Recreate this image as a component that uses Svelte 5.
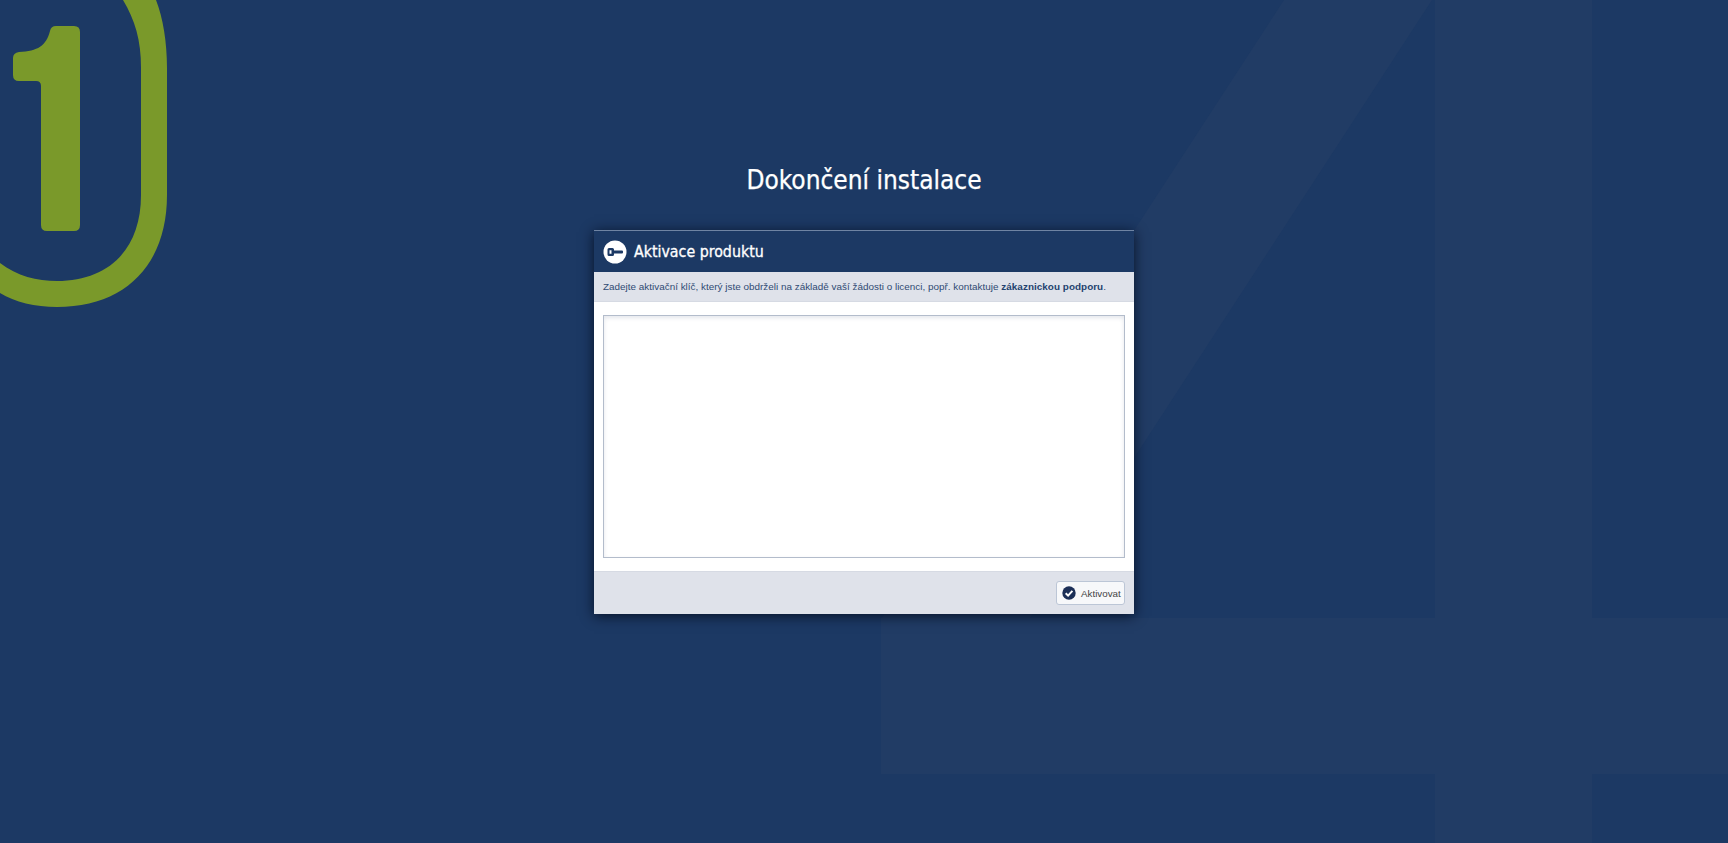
<script>
    let licenseKey = "";
</script>

<main class="page">
    <!-- big faded "4" in the background -->
    <svg class="bg-four" viewBox="0 0 1728 843" aria-hidden="true">
        <path d="M1284 0H1432L1030 618H1435V0H1592V618H1728V774H1592V843H1435V774H881V618L882 618Z" fill="#213c65" />
    </svg>

    <!-- green logo, cut off by the corner -->
    <svg class="logo" viewBox="0 0 170 310" aria-hidden="true">
        <path fill="#7a992a" d="M156 0C163 18 167 42 167 68V195C167 265 125 307 57 307C35 307 15 302 0 293V263C17 276 37 281 57 281C108 281 141 250 141 195V68C141 40 135 20 123 0Z" />
        <path fill="#7a992a" d="M56 26H74Q80 26 80 32V225Q80 231 74 231H47Q41 231 41 225V86Q41 81 36 81H19Q13 81 13 75V58Q13 53 19 52C38 51 46 46 50 31Q51 26 56 26Z" />
    </svg>

    <h1>Dokončení instalace</h1>

    <section class="dialog">
        <header>
            <svg class="key" viewBox="0 0 24 24" aria-hidden="true">
                <circle cx="12" cy="12" r="11.5" fill="#fff" />
                <path fill="#1c3964" fill-rule="evenodd" d="M6 8H9.5Q11 8 11 9.5V10.5H19Q20 10.5 20 11.5V12.5Q20 13.5 19 13.5H11V14.5Q11 16 9.5 16H6Q4.5 16 4.5 14.5V9.5Q4.5 8 6 8ZM6.5 10.2V13.8H8.5V10.2Z" />
            </svg>
            <h2>Aktivace produktu</h2>
        </header>

        <p class="hint">
            Zadejte aktivační klíč, který jste obdrželi na základě vaší žádosti o licenci, popř. kontaktuje
            <a href="#support">zákaznickou podporu</a>.
        </p>

        <div class="body">
            <textarea bind:value={licenseKey}></textarea>
        </div>

        <footer>
            <button type="button">
                <svg viewBox="0 0 14 14" aria-hidden="true">
                    <circle cx="7" cy="7" r="6.7" fill="#1c2f57" />
                    <path d="M3.7 7.2L6.1 9.6L10.4 4.9" fill="none" stroke="#fff" stroke-width="2" />
                </svg>
                Aktivovat
            </button>
        </footer>
    </section>
</main>

<style>
    :global(body) {
        margin: 0;
        background: #1c3964;
    }

    .page {
        position: relative;
        height: 843px;
        overflow: hidden;
        display: flex;
        flex-direction: column;
        align-items: center;
        background: #1c3964;
    }

    .bg-four {
        position: absolute;
        inset: 0;
        width: 1728px;
        height: 843px;
    }

    .logo {
        position: absolute;
        left: 0;
        top: 0;
        width: 170px;
        height: 310px;
    }

    h1 {
        position: relative;
        margin: 163px 0 0;
        height: 67px;
        font: 400 26px/34px "DejaVu Sans Condensed", Tahoma, sans-serif;
        -webkit-text-stroke: 0.25px #fff;
        color: #fff;
    }

    .dialog {
        position: relative;
        width: 540px;
        display: flex;
        flex-direction: column;
        box-shadow: 0 2px 12px rgba(3, 10, 28, 0.85);
        font-family: "Liberation Sans", Arial, sans-serif;
    }

    header {
        height: 41px;
        display: flex;
        align-items: center;
        gap: 7px;
        padding-left: 9px;
        background: #1c3964;
        border-top: 1px solid #6f84a3;
    }

    .key {
        width: 24px;
        height: 24px;
    }

    h2 {
        margin: 0;
        font: 400 15.8px/20px "DejaVu Sans Condensed", Tahoma, sans-serif;
        -webkit-text-stroke: 0.3px #fff;
        color: #fff;
    }

    .hint {
        margin: 0;
        height: 30px;
        box-sizing: border-box;
        padding-left: 9px;
        background: #dfe2ea;
        border-bottom: 1px solid #d6dae3;
        font-size: 9.9px;
        line-height: 29px;
        letter-spacing: 0.015px;
        color: #2f4a73;
    }

    .hint a {
        color: #24426f;
        font-weight: 700;
        letter-spacing: 0.05px;
        text-decoration: none;
    }

    .body {
        padding: 13px 9px 13px;
        background: #fff;
        display: flex;
    }

    textarea {
        flex: 1;
        height: 243px;
        box-sizing: border-box;
        margin: 0;
        padding: 4px;
        resize: none;
        border: 1px solid #b3bccb;
        border-radius: 0;
        outline: none;
        box-shadow: inset 0 2px 4px rgba(30, 50, 90, 0.12);
    }

    footer {
        height: 43px;
        box-sizing: border-box;
        padding-right: 9px;
        display: flex;
        justify-content: flex-end;
        align-items: center;
        background: #dfe2ea;
        border-top: 1px solid #d6dae3;
    }

    button {
        width: 69px;
        height: 24px;
        box-sizing: border-box;
        padding: 0 0 0 5px;
        display: flex;
        align-items: center;
        gap: 5px;
        background: #f7f8fa;
        border: 1px solid #bcc6d6;
        border-radius: 3px;
        font: 9.8px "Liberation Sans", Arial, sans-serif;
        color: #444;
        white-space: nowrap;
    }

    button svg {
        width: 14px;
        height: 14px;
        flex: none;
    }
</style>
